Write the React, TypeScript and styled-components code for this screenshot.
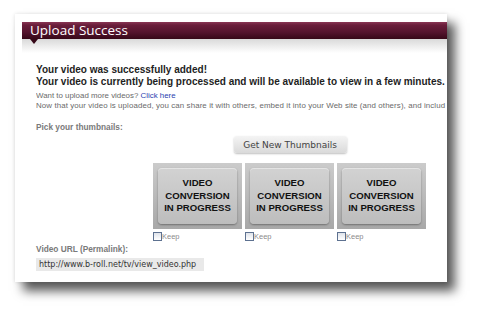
import React from "react";
import styled, { createGlobalStyle } from "styled-components";

const Global = createGlobalStyle`
  html, body { margin: 0; padding: 0; background: #fff; }
  body { width: 480px; height: 311px; overflow: hidden; font-family: "Liberation Sans", Arial, sans-serif; }
`;

const Page = styled.div`
  padding: 14px 0 0 15px;
`;

const Card = styled.div`
  position: relative;
  width: 432px;
  height: 268px;
  background: #fff;
  overflow: hidden;
  box-shadow: 8px 9px 10px rgba(0, 0, 0, 0.65), 0 0 4px rgba(0, 0, 0, 0.12);
`;

const HeaderWrap = styled.div`
  position: relative;
  margin: 8px 0 0 7px;
`;

const Header = styled.div`
  height: 17px;
  background: linear-gradient(#8a3554 0%, #6a1e3b 18%, #55142e 60%, #360818 100%);
  color: #fff;
  font-family: "Open Sans", "DejaVu Sans", sans-serif;
  font-size: 13.5px;
  line-height: 17px;
  padding-left: 8px;
`;

const Pointer = styled.div`
  position: absolute;
  left: 8px;
  top: 17px;
  width: 0;
  height: 0;
  border-left: 4px solid transparent;
  border-right: 4px solid transparent;
  border-top: 5px solid #360818;
`;

const Shade = styled.div`
  height: 14px;
  background: linear-gradient(#d9d9d9, #ffffff);
`;

const Body = styled.div`
  padding: 11px 0 0 21px;
  white-space: nowrap;
`;

const Strong = styled.div`
  font-weight: bold;
  font-size: 10px;
  line-height: 12px;
  color: #1e1e1e;
`;

const Small = styled.div<{ $top?: number; $spacing?: number }>`
  font-size: 7.9px;
  line-height: 10px;
  color: #6a6a6a;
  margin-top: ${(p) => p.$top ?? 0}px;
  letter-spacing: ${(p) => p.$spacing ?? 0}px;
  overflow: hidden;
`;

const Link = styled.a`
  color: #2a3fb0;
  text-decoration: none;
`;

const Label = styled.div<{ $top: number }>`
  font-weight: bold;
  font-size: 8.3px;
  line-height: 10px;
  color: #7a7a7a;
  margin-top: ${(p) => p.$top}px;
`;

const ThumbArea = styled.div`
  margin: 4px 0 0 117px;
  width: 274px;
  display: flex;
  flex-direction: column;
  align-items: center;
`;

const Button = styled.button`
  height: 17px;
  width: 113px;
  padding: 0;
  border: none;
  border-radius: 3px;
  background: linear-gradient(#f4f4f4, #dadada);
  box-shadow: 0 1px 2px rgba(0, 0, 0, 0.25);
  font-family: "DejaVu Sans", sans-serif;
  font-size: 9px;
  color: #444;
`;

const ThumbRow = styled.div`
  margin-top: 10px;
  display: flex;
  gap: 3px;
  align-self: stretch;
`;

const ThumbCol = styled.div`
  width: 89px;
  display: flex;
  flex-direction: column;
`;

const Thumb = styled.div`
  height: 66px;
  padding: 5px;
  box-sizing: border-box;
  background: linear-gradient(#cbcbcb, #a8a8a8);
  display: flex;
`;

const ThumbInner = styled.div`
  flex: 1;
  border-radius: 4px;
  background: linear-gradient(#d2d2d2, #bdbdbd);
  box-shadow: 0 1px 2px rgba(0, 0, 0, 0.35), inset 0 1px 0 rgba(255, 255, 255, 0.4);
  display: flex;
  align-items: center;
  justify-content: center;
  text-align: center;
  font-weight: bold;
  font-size: 9.6px;
  line-height: 12.5px;
  color: #111;
`;

const KeepRow = styled.label`
  margin-top: 3px;
  display: flex;
  align-items: center;
  font-size: 7.5px;
  line-height: 9px;
  color: #8c8c8c;
`;

const Box = styled.span`
  width: 9px;
  height: 9px;
  box-sizing: border-box;
  border: 1px solid #5d7190;
  background: linear-gradient(#dfe3ea, #fff);
`;

const UrlBox = styled.div`
  margin-top: 4px;
  width: 168px;
  height: 13px;
  background: #e9e9e9;
  font-family: "DejaVu Sans", sans-serif;
  font-size: 8px;
  line-height: 13px;
  color: #333;
  padding-left: 3px;
  box-sizing: border-box;
`;

const thumbs = [0, 1, 2];

export default function App() {
  return (
    <>
      <Global />
      <Page>
        <Card>
          <HeaderWrap>
            <Header>Upload Success</Header>
            <Pointer />
            <Shade />
          </HeaderWrap>
          <Body>
            <Strong>Your video was successfully added!</Strong>
            <Strong>Your video is currently being processed and will be available to view in a few minutes.</Strong>
            <Small $top={3}>
              Want to upload more videos? <Link href="#">Click here</Link>
            </Small>
            <Small $spacing={0.1}>
              Now that your video is uploaded, you can share it with others, embed it into your Web site (and others), and includ
            </Small>
            <Label $top={11}>Pick your thumbnails:</Label>
            <ThumbArea>
              <Button>Get New Thumbnails</Button>
              <ThumbRow>
                {thumbs.map((t) => (
                  <ThumbCol key={t}>
                    <Thumb>
                      <ThumbInner>
                        VIDEO
                        <br />
                        CONVERSION
                        <br />
                        IN PROGRESS
                      </ThumbInner>
                    </Thumb>
                    <KeepRow>
                      <Box />
                      Keep
                    </KeepRow>
                  </ThumbCol>
                ))}
              </ThumbRow>
            </ThumbArea>
            <Label $top={3}>Video URL (Permalink):</Label>
            <UrlBox>http://www.b-roll.net/tv/view_video.php</UrlBox>
          </Body>
        </Card>
      </Page>
    </>
  );
}
